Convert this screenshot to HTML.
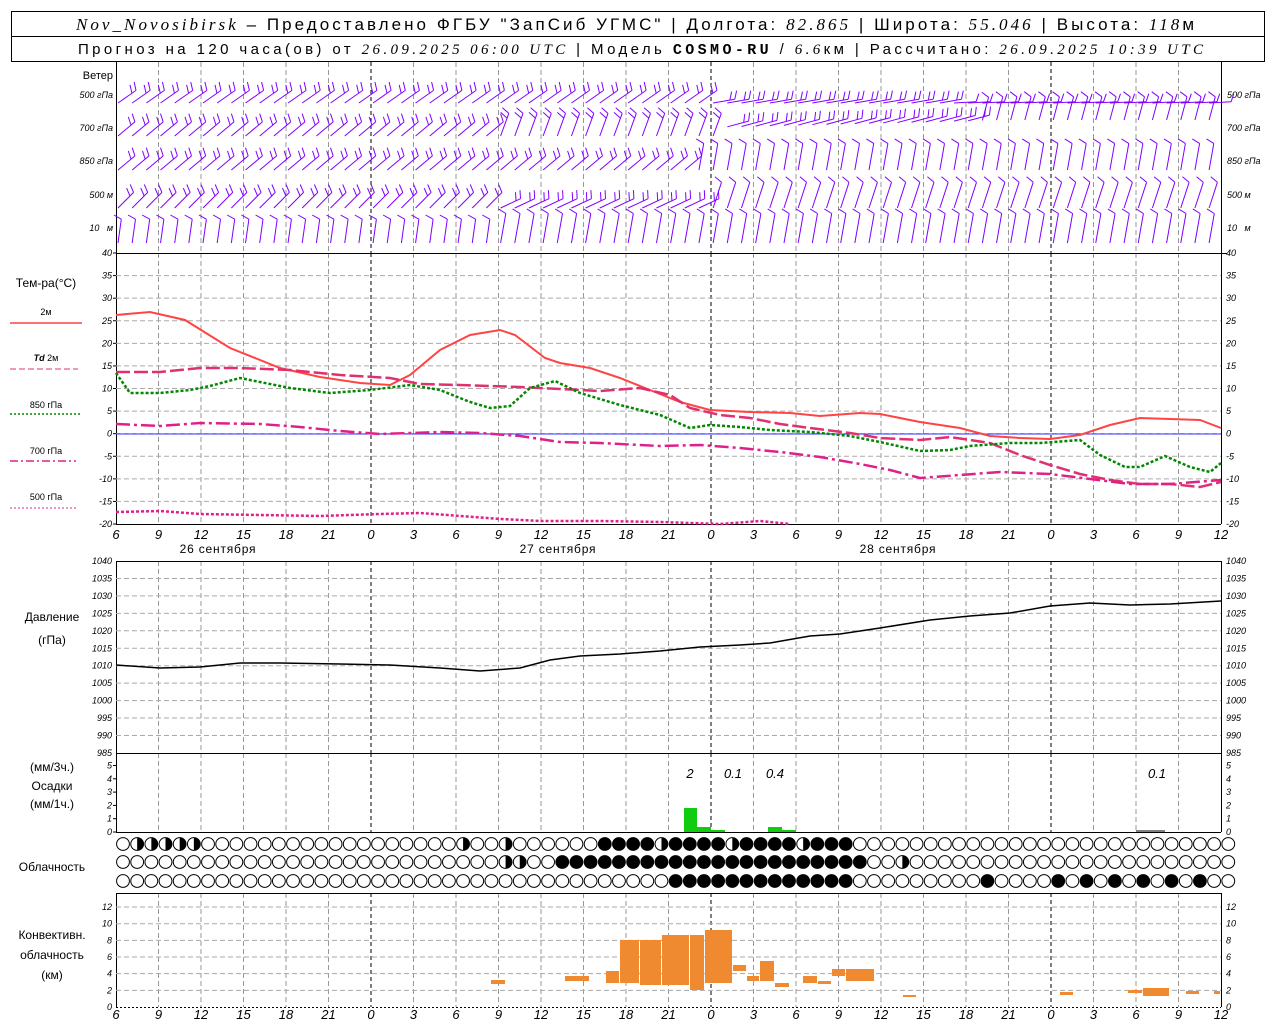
<!DOCTYPE html>
<html><head><meta charset="utf-8"><style>
html,body{margin:0;padding:0;background:#fff;width:1280px;height:1024px;overflow:hidden}
svg{display:block}
text{font-family:"Liberation Sans",sans-serif}
</style></head><body>
<svg id="s" width="1280" height="1024" xmlns="http://www.w3.org/2000/svg"></svg>
<script>
var o=[];
function L(x1,y1,x2,y2,c,w,d){o.push('<line x1="'+x1+'" y1="'+y1+'" x2="'+x2+'" y2="'+y2+'" stroke="'+c+'" stroke-width="'+(w||1)+'"'+(d?' stroke-dasharray="'+d+'"':'')+'/>');}
function T(x,y,t,sz,anc,st){o.push('<text x="'+x+'" y="'+y+'" font-size="'+(sz||11)+'" text-anchor="'+(anc||'start')+'"'+(st?' '+st:'')+'>'+t+'</text>');}
function P(pts,c,w,d){o.push('<polyline fill="none" points="'+pts.map(function(p){return p.join(',')}).join(' ')+'" stroke="'+c+'" stroke-width="'+w+'"'+(d?' stroke-dasharray="'+d+'"':'')+'/>');}
function R(x,y,w,h,c){o.push('<rect x="'+x+'" y="'+y+'" width="'+w+'" height="'+h+'" fill="'+c+'"/>');}
var X0=116,X1=1221,DX=42.5;
o.push('<rect x="11.5" y="11.5" width="1253" height="50" fill="none" stroke="#000"/>');L(11,36.5,1265,36.5,'#000');
o.push('<text x="76" y="30" font-size="17" textLength="1118" lengthAdjust="spacing"><tspan font-family="Liberation Serif" font-style="italic">Nov_Novosibirsk</tspan> – Предоставлено ФГБУ "ЗапСиб УГМС" | Долгота: <tspan font-family="Liberation Serif" font-style="italic">82.865</tspan> | Широта: <tspan font-family="Liberation Serif" font-style="italic">55.046</tspan> | Высота: <tspan font-family="Liberation Serif" font-style="italic">118</tspan>м</text>');
o.push('<text x="78" y="54" font-size="15" textLength="1125" lengthAdjust="spacing">Прогноз на 120 часа(ов) от <tspan font-family="Liberation Serif" font-style="italic">26.09.2025 06:00 UTC</tspan>  | Модель <tspan font-family="Liberation Mono" font-weight="bold">COSMO-RU</tspan> / <tspan font-family="Liberation Serif" font-style="italic">6.6</tspan>км | Рассчитано: <tspan font-family="Liberation Serif" font-style="italic">26.09.2025 10:39 UTC</tspan></text>');
var panels=[[62,253],[253,524],[561,753],[753,832],[893,1007]];
for(var i=0;i<=26;i++){var x=X0+i*DX;var day=(i%8==6);
 panels.forEach(function(p){ if(i>0&&i<26) L(x,p[0],x,p[1],day?'#000':'#999',1,day?'4,3':'5,3');});}
panels.forEach(function(p){L(X0+.5,p[0],X0+.5,p[1],'#000');L(X1+.5,p[0],X1+.5,p[1],'#000');});
L(X0,253.5,X1+6,253.5,'#000');L(X0,524.5,X1,524.5,'#000');L(X0,561.5,X1,561.5,'#000');L(X0,753.5,X1,753.5,'#000');L(X0,832.5,X1,832.5,'#000');L(X0,893.5,X1,893.5,'#000');L(X0,1007.5,X1,1007.5,'#000',1,'2,2');
for(var v=40;v>=-20;v-=5){var y=253+(40-v)*4.517;if(v<40&&v>-20)L(X0,y,X1,y,'#aaa',1,'5,3');T(X0-4,y+3,v,9,'end','font-style="italic"');T(X1+5,y+3,v,9,'start','font-style="italic"');L(X0-3,y,X0,y,'#000');}
L(X0,434,X1,434,'#33f',1);
for(var k=0;k<=11;k++){var y=561+k*17.45,v=1040-k*5;if(k>0&&k<11)L(X0,y,X1,y,'#aaa',1,'5,3');T(X0-4,y+3,v,9,'end','font-style="italic"');T(X1+5,y+3,v,9,'start','font-style="italic"');}
for(var v=0;v<=5;v++){var y=832-v*13.3;T(X0-4,y+3,v,9,'end','font-style="italic"');T(X1+5,y+3,v,9,'start','font-style="italic"');L(X0-3,y,X0,y,'#000');}
for(var v=0;v<=12;v+=2){var y=1007-v*8.33;if(v>0)L(X0,y,X1,y,'#aaa',1,'5,3');T(X0-4,y+3,v,9,'end','font-style="italic"');T(X1+5,y+3,v,9,'start','font-style="italic"');}
for(var i=0;i<=26;i++){var x=X0+i*DX,t=[6,9,12,15,18,21,0,3][i%8];T(x,539,t,13,'middle','font-style="italic" font-family="Liberation Serif"');T(x,1019,t,13,'middle','font-style="italic" font-family="Liberation Serif"');}
T(218,553,'26 сентября',12,'middle','letter-spacing="0.8"');T(558,553,'27 сентября',12,'middle','letter-spacing="0.8"');T(898,553,'28 сентября',12,'middle','letter-spacing="0.8"');
T(113,79,'Ветер',11,'end');
[['500 гПа',98],['700 гПа',131],['850 гПа',164],['500 м',198],['10 &#160; м',231]].forEach(function(a){T(113,a[1],a[0],9,'end','font-style="italic"');T(1227,a[1],a[0],9,'start','font-style="italic"');});
T(46,287,'Тем-ра(°C)',12,'middle');
T(46,315,'2м',9,'middle');L(10,323,82,323,'#f44',1.5);
T(46,361,'<tspan font-style="italic" font-weight="bold">Td</tspan>  2м',9,'middle');L(10,369,78,369,'#e03070',1,'6,3');
T(46,408,'850 гПа',9,'middle');L(10,414,82,414,'#080',1.5,'2,2');
T(46,454,'700 гПа',9,'middle');L(10,461,76,461,'#e0208a',1.5,'8,3,2,3');
T(46,500,'500 гПа',9,'middle');L(10,508,78,508,'#e0208a',1,'2,2');
T(52,621,'Давление',12,'middle');T(52,644,'(гПа)',12,'middle');
T(52,771,'(мм/3ч.)',12,'middle');T(52,790,'Осадки',12,'middle');T(52,808,'(мм/1ч.)',12,'middle');
T(52,871,'Облачность',12,'middle');
T(52,939,'Конвективн.',12,'middle');T(52,959,'облачность',12,'middle');T(52,979,'(км)',12,'middle');
P([[116,315],[150,312],[185,320],[230,348],[280,368],[320,377],[360,383],[390,385],[410,375],[440,350],[470,335],[500,330],[515,335],[545,358],[560,363],[590,368],[620,378],[650,390],[680,402],[710,410],[750,412],[790,413],[820,416],[860,413],[880,414],[920,422],[960,428],[990,436],[1020,438],[1050,439],[1080,435],[1110,425],[1140,418],[1170,419],[1200,420],[1221,428]],'#f44',2);
P([[116,372],[160,372],[200,368],[240,368],[290,370],[340,375],[390,378],[420,384],[460,385],[520,387],[560,389],[600,391],[640,388],[670,395],[690,408],[720,415],[750,418],[780,424],[810,428],[850,433],[880,438],[920,440],[950,437],[990,443],[1020,455],[1050,465],[1080,474],[1110,480],[1140,484],[1170,484],[1200,487],[1221,482]],'#e03070',2.5,'14,4');
P([[116,373],[130,393],[160,393],[190,390],[210,386],[240,378],[290,388],[330,393],[370,390],[410,385],[440,390],[470,402],[490,408],[510,406],[530,388],[555,381],[580,393],[620,405],[660,415],[690,428],[710,425],[740,427],[770,430],[810,432],[850,436],[880,442],[920,451],[950,450],[970,446],[1010,443],[1040,443],[1080,440],[1100,455],[1125,467],[1140,467],[1165,456],[1190,467],[1210,472],[1221,463]],'#080',2.5,'3,2');
P([[116,424],[160,426],[200,423],[260,424],[300,427],[340,431],[380,434],[440,432],[480,433],[520,436],[560,442],[600,443],[660,446],[700,445],[740,448],[780,452],[820,457],[860,464],[890,470],[920,478],[960,475],[1000,472],[1050,474],[1090,479],[1130,484],[1170,484],[1221,480]],'#e0208a',2.5,'14,4,3,4');
P([[116,512],[160,511],[200,514],[260,515],[320,516],[380,514],[420,513],[460,516],[500,519],[540,521],[600,521],[660,522],[720,524],[760,521],[790,524]],'#e0208a',2.5,'3,2');
P([[116,665],[160,668],[200,667],[240,663],[280,663],[340,664],[390,665],[440,668],[480,671],[520,668],[550,660],[580,656],[620,654],[660,651],[700,647],[740,645],[770,643],[810,636],[840,634],[880,628],[930,620],[970,616],[1010,613],[1050,606],[1090,603],[1130,605],[1170,604],[1221,601]],'#000',1.5);
R(684,808,13,24,'#1c1');R(697,827,14,5,'#1c1');R(711,830,14,2,'#1c1');R(768,827,14,5,'#1c1');R(782,830,14,2,'#1c1');L(1136,831,1165,831,'#000');
[['2',690],['0.1',733],['0.4',775],['0.1',1157]].forEach(function(a){T(a[1],778,a[0],13,'middle','font-style="italic" font-family="Liberation Serif"');});
var fills=[
 function(i,x){return x>=600&&x<=850?(i%5==3?0.5:1):(x<200&&i>0?0.7:(x>440&&x<540&&i%3==0?0.5:0));},
 function(i,x){return x>=555&&x<=860?1:((x>=495&&x<530)||(x>=890&&x<915)?0.5:0);},
 function(i,x){return x>=665&&x<=850?1:((x>550&&x<560)?0.5:(x>=1030&&x<=1200&&i%2==0?1:(x>985&&x<1000?1:0)));}
];
[844,862,881].forEach(function(cy,r){for(var i=0;i<79;i++){var cx=123+i*14.17;var f=fills[r](i,cx);
 o.push('<circle cx="'+cx+'" cy="'+cy+'" r="6.4" fill="'+(f==1?'#000':'#fff')+'" stroke="#000"/>');
 if(f>0&&f<1)o.push('<path d="M'+cx+','+(cy-6.4)+' A6.4,6.4 0 0 1 '+cx+','+(cy+6.4)+' Z" fill="#000"/>');}});
[[491,506,980,984],[565,590,976,981],[606,620,971,983],[620,640,940,983],[640,662,940,985],[662,690,935,985],[690,705,935,990],[705,733,930,983],[733,747,965,971],[747,760,976,981],[760,775,961,981],[775,790,983,987],[803,818,976,983],[818,832,981,984],[832,846,969,976],[846,875,969,981],[903,917,995,997],[1060,1074,992,995],[1128,1143,990,993],[1143,1170,988,996],[1186,1200,991,994],[1214,1221,991,994]].forEach(function(b){R(b[0],b[2],b[1]-b[0]-1,b[3]-b[2],'#f08a30');});
var PC='#8000ff';
function barb(x,y,ang,len,n){var a=ang*Math.PI/180,dx=Math.cos(a),dy=-Math.sin(a);var tx=x+dx*len,ty=y+dy*len;L(x,y,tx.toFixed(1),ty.toFixed(1),PC);
 for(var k=0;k<n;k++){var bx=tx-dx*k*5,by=ty-dy*k*5;var px=-dy,py=dx;var fx=bx+(px*-1+dx*0.4)*8,fy=by+(py*-1+dy*0.4)*8;L(bx.toFixed(1),by.toFixed(1),fx.toFixed(1),fy.toFixed(1),PC);}}
var rows=[
 [103,function(x){return x<700?[35,22,2]:(x<950?[10,22,2]:[3,22,1]);}],
 [136,function(x){return x<500?[40,22,2]:(x<720?[70,24,2]:(x<980?[15,22,2]:[75,24,1]));}],
 [170,function(x){return x<690?[40,22,2]:[80,27,1];}],
 [208,function(x){return x<500?[45,22,2]:(x<700?[25,22,2]:[72,27,1]);}],
 [243,function(x){return x<500?[82,24,1]:[80,30,1];}]];
rows.forEach(function(r){for(var x=118;x<1218;x+=14.17){var p=r[1](x);var yy=r[0];
 if(r[0]==136&&x>720)yy=120+Math.max(0,(1000-x)/40);
 barb(x,yy,p[0],p[1],p[2]);}});
document.getElementById('s').innerHTML=o.join('');
</script>
</body></html>
